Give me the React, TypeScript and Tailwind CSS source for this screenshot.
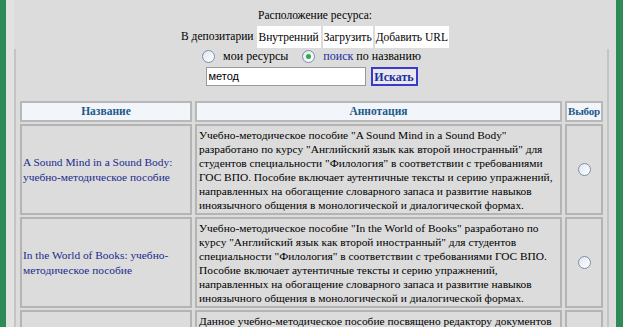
const rows = [
  {
    title: ["A Sound Mind in a Sound Body:", "учебно-методическое пособие"],
    lines: [
      'Учебно-методическое пособие "A Sound Mind in a Sound Body"',
      'разработано по курсу "Английский язык как второй иностранный" для',
      'студентов специальности "Филология" в соответствии с требованиями',
      "ГОС ВПО. Пособие включает аутентичные тексты и серию упражнений,",
      "направленных на обогащение словарного запаса и развитие навыков",
      "иноязычного общения в монологической и диалогической формах.",
    ],
  },
  {
    title: ["In the World of Books: учебно-", "методическое пособие"],
    lines: [
      'Учебно-методическое пособие "In the World of Books" разработано по',
      'курсу "Английский язык как второй иностранный" для студентов',
      'специальности "Филология" в соответствии с требованиями ГОС ВПО.',
      "Пособие включает аутентичные тексты и серию упражнений,",
      "направленных на обогащение словарного запаса и развитие навыков",
      "иноязычного общения в монологической и диалогической формах.",
    ],
  },
  {
    title: [],
    lines: ["Данное учебно-методическое пособие посвящено редактору документов"],
  },
]

function Radio({ checked }: { checked?: boolean }) {
  return (
    <span className="inline-flex h-[13px] w-[13px] items-center justify-center rounded-full border border-[#7a8fa8] bg-gradient-to-br from-[#dfe6ee] to-white">
      {checked && <span className="h-[5px] w-[5px] rounded-full bg-[#2fa84f]" />}
    </span>
  )
}

export default function App() {
  return (
    <div className="flex h-[327px] w-[623px] overflow-hidden bg-[#dcdcdc] font-['Liberation_Serif','Times_New_Roman',serif] text-[12px] text-black">
      <div className="w-[6px] shrink-0 bg-[#2e8b57]" />
      <div className="w-[8px] shrink-0 bg-[#e2e2e2]" />
      <div className="flex flex-1 flex-col">
        <div className="flex flex-col items-center pt-[8px]">
          <div className="text-[11.5px] leading-[14px]">Расположение ресурса:</div>
          <div className="mt-[4px] flex items-center gap-[2px] text-[11.5px]">
            <span className="mr-[1px]">В депозитарии</span>
            <span className="bg-white px-[2px] py-[4px] leading-[14px]">Внутренний</span>
            <span className="bg-white px-[1px] py-[4px] leading-[14px]">Загрузить</span>
            <span className="bg-white px-[1px] py-[4px] leading-[14px]">Добавить URL</span>
          </div>
        </div>
        <div className="mr-[7px] mt-[1px] flex flex-1 border-l-2 border-r-2 border-[#c4c4c4]">
          <div className="flex flex-1 flex-col">
            <div className="flex items-center justify-center leading-[14px]">
              <Radio />
              <span className="ml-[8px] mr-[14px]">мои ресурсы</span>
              <Radio checked />
              <span className="ml-[8px]">
                <span className="text-[#1a2ea0]">поиск</span> по названию
              </span>
            </div>
            <div className="mt-[4px] flex items-center justify-center gap-[5px]">
              <div className="h-[19px] w-[160px] border border-[#9a9a9a] bg-white pl-[2px] font-['Liberation_Sans',sans-serif] text-[11px] leading-[17px]">
                метод
              </div>
              <button className="h-[19px] w-[47px] border-2 border-[#3a3ac8] bg-[#e8e8ee] text-[12px] font-bold leading-[14px] text-[#1a2ea0]">
                Искать
              </button>
            </div>
            <div className="mt-[15px] ml-[4px] grid grid-cols-[172px_367px_38px] gap-x-[3px] gap-y-[2px] text-[11.4px]">
              <div className="flex h-[21px] items-center justify-center border-2 border-[#b8b8b8] bg-[#f2f5f9] text-[11.5px] font-bold text-[#1d5a8c]">
                Название
              </div>
              <div className="flex h-[21px] items-center justify-center border-2 border-[#b8b8b8] bg-[#f2f5f9] text-[11.5px] font-bold text-[#1d5a8c]">
                Аннотация
              </div>
              <div className="flex h-[21px] items-center justify-center overflow-hidden border-2 border-[#b8b8b8] bg-[#f2f5f9] text-[11px] font-bold tracking-[-0.2px] text-[#1d5a8c]">
                Выбор
              </div>
              {rows.map((r, i) => (
                <>
                  <div key={`t${i}`} className="flex flex-col justify-center border-2 border-[#b4b4b4] px-[1px] leading-[15px] text-[#1a2a8c]">
                    {r.title.map((t) => (
                      <span key={t} className="whitespace-nowrap">{t}</span>
                    ))}
                  </div>
                  <div key={`a${i}`} className="flex flex-col border-2 border-[#b4b4b4] px-[2px] pt-[2px] pb-[1px] leading-[14px]">
                    {r.lines.map((l) => (
                      <span key={l} className="whitespace-nowrap">{l}</span>
                    ))}
                  </div>
                  <div key={`r${i}`} className="flex items-center justify-center border-2 border-[#b4b4b4]">
                    {r.title.length > 0 && <Radio />}
                  </div>
                </>
              ))}
            </div>
          </div>
        </div>
      </div>
      <div className="w-[7px] shrink-0 bg-[#2e8b57]" />
    </div>
  )
}
